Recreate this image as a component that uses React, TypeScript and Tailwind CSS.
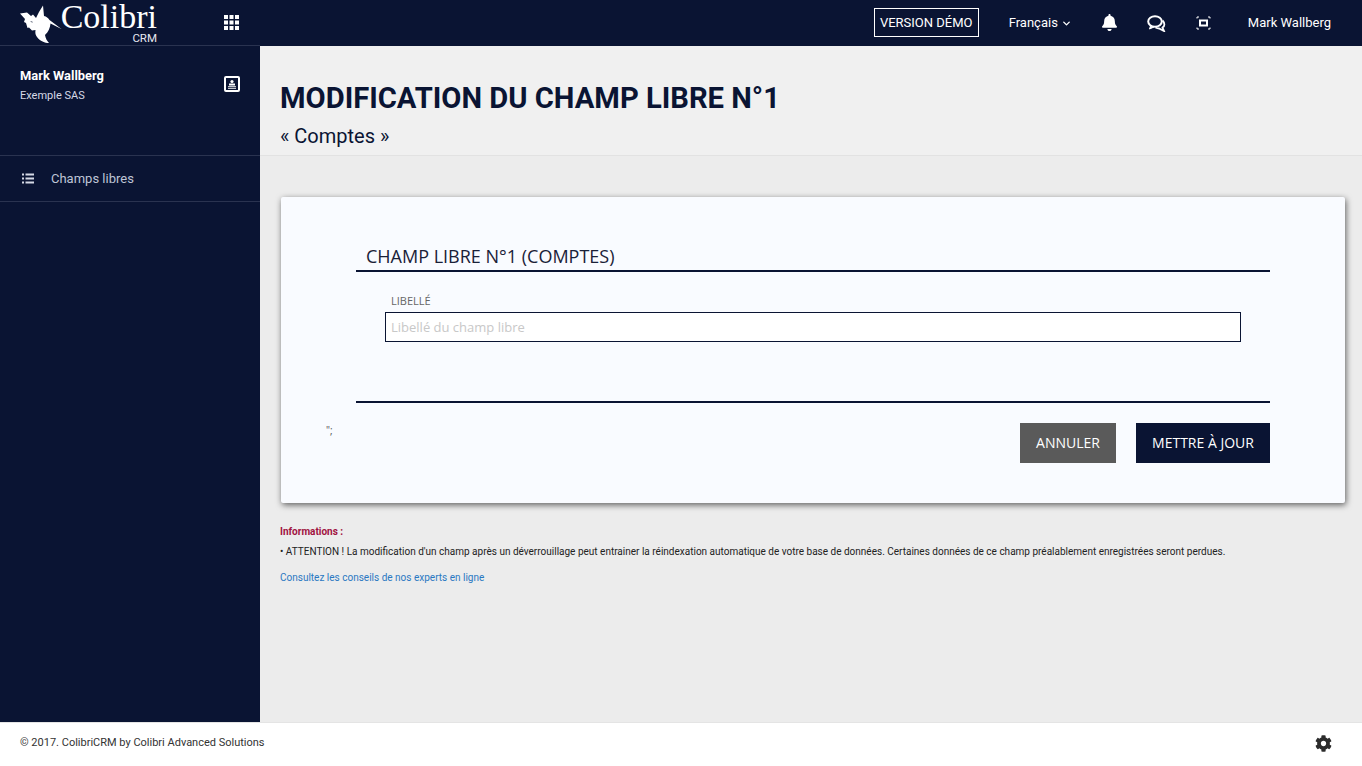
import React from "react";
import { LuChevronDown } from "react-icons/lu";
import { FaBell, FaCog } from "react-icons/fa";

const Bird = () => (
  <svg width="42" height="42" viewBox="0 0 42 42" className="shrink-0">
    <path fill="#fff" d="M0 11.5 L7 10.5 L11 14 L13 12.5 L16 16 L19 10 L23 3.5 L24 14 C26.5 14.5 28 16 29.5 18 L41.5 27 L30.5 21.5 C30 26 28.5 30 25 33 C25.5 36 27 39 29 41 C25 41 20 39 17 35 C15.5 33 15 31 15.5 28 L12 28.5 L9 25.5 L7.5 26 L6 21 L4 20 L5 17 Z" />
    <path fill="#0a1433" d="M10 19 L13 20 L12 20.5 Z" />
  </svg>
);

const GridIcon = () => (
  <svg width="15" height="15" viewBox="0 0 15 15" fill="#fff" className="shrink-0">
    <rect x="0" y="0" width="4" height="4" />
    <rect x="5.5" y="0" width="4" height="4" />
    <rect x="11" y="0" width="4" height="4" />
    <rect x="0" y="5.5" width="4" height="4" />
    <rect x="5.5" y="5.5" width="4" height="4" />
    <rect x="11" y="5.5" width="4" height="4" />
    <rect x="0" y="11" width="4" height="4" />
    <rect x="5.5" y="11" width="4" height="4" />
    <rect x="11" y="11" width="4" height="4" />
  </svg>
);

const Chat = () => (
  <svg width="19" height="17" viewBox="0 0 19 17" fill="none" stroke="#fff" strokeWidth="2">
    <ellipse cx="8" cy="6.5" rx="6.8" ry="5.3" />
    <path d="M3.5 11 L2.5 14 L7 12" fill="#fff" strokeWidth="1" />
    <path d="M15.5 5.5 C18 8 18 11 15.5 12.5 L17 16 L12 13.5 C10.5 13.5 9.5 13 8.5 12.5" strokeWidth="1.8" />
  </svg>
);

const FocusIcon = () => (
  <svg width="15" height="14" viewBox="0 0 15 14" fill="none" stroke="#fff">
    <path d="M1 2.5 V1 H3 M12 1 H14 V2.5 M1 11.5 V13 H3 M12 13 H14 V11.5" strokeWidth="1" />
    <rect x="4" y="4.5" width="7" height="5" strokeWidth="2" />
  </svg>
);

const ContactIcon = () => (
  <svg width="16" height="16" viewBox="0 0 16 16">
    <rect x="1" y="1" width="14" height="14" rx="1" fill="none" stroke="#fff" strokeWidth="2" />
    <circle cx="8" cy="5.5" r="1.6" fill="#fff" />
    <path fill="#fff" d="M5 7.5 H11 V9.5 H5 Z M4 10.3 H12 V11.2 H4 Z M4 12 H12 V12.8 H4 Z" />
  </svg>
);

const ListIcon = () => (
  <svg width="12" height="11" viewBox="0 0 12 11" fill="#d5d9e6">
    <rect x="0" y="0.5" width="2" height="2" />
    <rect x="3.5" y="0.5" width="8.5" height="2" />
    <rect x="0" y="4.5" width="2" height="2" />
    <rect x="3.5" y="4.5" width="8.5" height="2" />
    <rect x="0" y="8.5" width="2" height="2" />
    <rect x="3.5" y="8.5" width="8.5" height="2" />
  </svg>
);

export default function App() {
  return (
    <div className="flex h-[766px] w-full flex-col overflow-hidden bg-[#ececec] font-['Roboto',sans-serif]">
      <header className="flex h-[46px] shrink-0 items-center bg-[#0a1433] text-white">
        <div className="flex h-full w-[260px] shrink-0 items-center border-b border-[#2a3350] pl-[20px]">
          <Bird />
          <div className="flex w-[95px] flex-col items-end pt-[1px]">
            <span className="font-['Liberation_Serif',serif] text-[34px] leading-[30px] whitespace-nowrap">Colibri</span>
            <span className="text-[11.5px] leading-[12px] text-[#e6e8f0]">CRM</span>
          </div>
          <span className="ml-[67px] flex"><GridIcon /></span>
        </div>
        <div className="flex h-full flex-1 items-center justify-end pr-[31px] text-[13px]">
          <span className="mb-[1px] flex h-[29px] w-[105px] items-center justify-center border border-white">VERSION DÉMO</span>
          <span className="ml-[30px] flex items-center gap-[3px]">Français <LuChevronDown strokeWidth={3} className="text-[11px]" /></span>
          <FaBell className="ml-[29px] mb-[1px] text-[17px]" />
          <span className="ml-[29px] flex"><Chat /></span>
          <span className="ml-[30px] flex"><FocusIcon /></span>
          <span className="ml-[37px]">Mark Wallberg</span>
        </div>
      </header>

      <div className="flex min-h-0 flex-1">
        <aside className="w-[260px] shrink-0 bg-[#0a1433]">
          <div className="flex h-[110px] items-start justify-between border-b border-[#2a3350] pl-[20px] pr-[20px] pt-[22px]">
            <div>
              <div className="text-[12.9px] leading-[15px] font-bold text-white">Mark Wallberg</div>
              <div className="mt-[6px] text-[11px] leading-[13px] text-[#d5d9e6]">Exemple SAS</div>
            </div>
            <span className="mt-[8px] flex"><ContactIcon /></span>
          </div>
          <div className="flex h-[46px] items-center border-b border-[#2a3350] pl-[22px] text-[13px] text-[#bfc5d6]">
            <ListIcon />
            <span className="ml-[17px]">Champs libres</span>
          </div>
        </aside>

        <main className="min-w-0 flex-1">
          <div className="h-[110px] border-b border-[#e2e2e2] bg-[#f0f0f0] pl-[20px] pt-[34px]">
            <h1 className="text-[29.2px] leading-[36px] font-bold text-[#0a1433]">MODIFICATION DU CHAMP LIBRE N°1</h1>
            <p className="mt-[8px] text-[20px] leading-[24px] text-[#0a1433]">« Comptes »</p>
          </div>

          <div className="px-[17px] pl-[21px] pt-[41px]">
            <section className="h-[306px] rounded-[2px] bg-[#f9fbff] pl-[75px] pr-[75px] pt-[46px] font-['Open_Sans',sans-serif] shadow-[1px_2px_6px_rgba(0,0,0,0.6)]">
              <h2 className="border-b-2 border-[#0a1433] pb-[1px] pl-[10px] text-[18px] leading-[26px] text-[#1a2138]">CHAMP LIBRE N°1 (COMPTES)</h2>
              <div className="pl-[29px] pr-[29px] pt-[22px]">
                <label className="block pl-[6px] text-[11px] leading-[14px] text-[#666]">LIBELLÉ</label>
                <div className="mt-[4px] flex h-[30px] items-center border border-[#0a1433] bg-white pl-[5px] pt-[1px] text-[13px] text-[#c8c8c8]">Libellé du champ libre</div>
              </div>
              <div className="mt-[59px] border-t-2 border-[#0a1433]" />
              <div className="relative mt-[20px] flex justify-end gap-[20px]">
                <span className="absolute left-[-30px] top-0 text-[10px] text-[#555]">";</span>
                <button className="flex h-[40px] w-[96px] items-center justify-center bg-[#5a5a5a] pb-[2px] text-[14px] text-white">ANNULER</button>
                <button className="flex h-[40px] w-[134px] items-center justify-center bg-[#0a1433] pb-[2px] text-[14px] text-white">METTRE À JOUR</button>
              </div>
            </section>

            <div className="ml-[-1px] pt-[23px] text-[10px] leading-[12px]">
              <div className="font-bold text-[#a0123f]">Informations :</div>
              <div className="mt-[8px] text-[#222]">• ATTENTION ! La modification d'un champ après un déverrouillage peut entrainer la réindexation automatique de votre base de données. Certaines données de ce champ préalablement enregistrées seront perdues.</div>
              <div className="mt-[14px] text-[#2a78c2]">Consultez les conseils de nos experts en ligne</div>
            </div>
          </div>
        </main>
      </div>

      <footer className="flex h-[44px] shrink-0 items-center justify-between border-t border-[#e4e4e4] bg-white pb-[2px] pl-[20px] pr-[30px] text-[11px] text-[#333]">
        <span>© 2017. ColibriCRM by Colibri Advanced Solutions</span>
        <FaCog className="text-[17px] text-[#2b2b2b]" />
      </footer>
    </div>
  );
}
